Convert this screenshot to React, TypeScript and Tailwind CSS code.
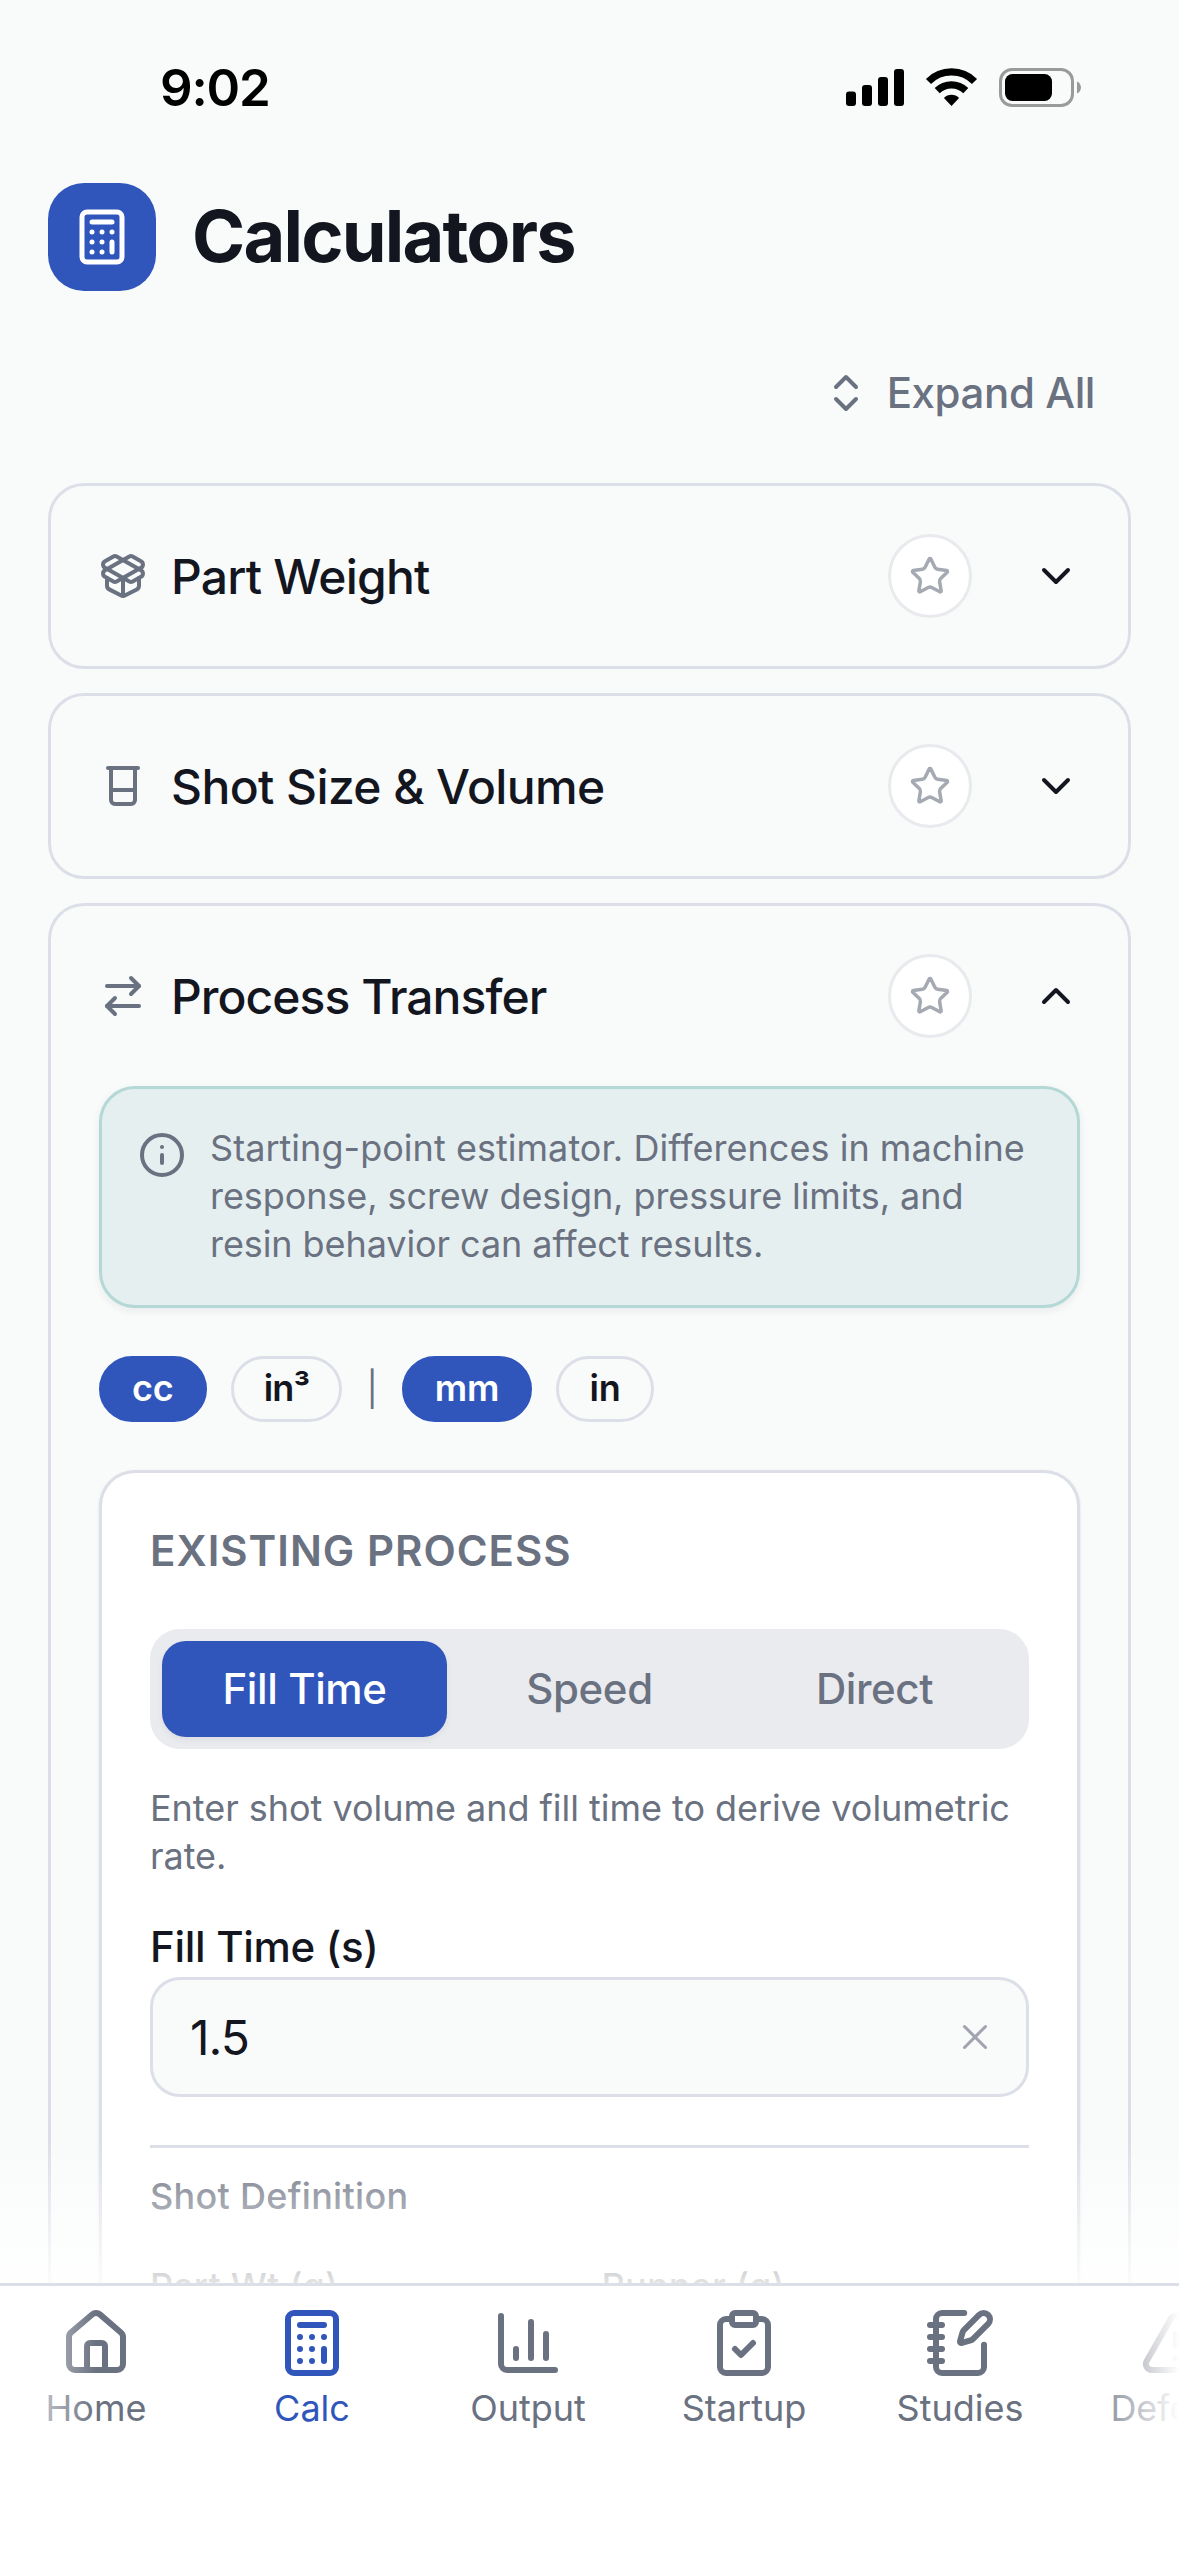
import { useState } from "react";
import type { LucideIcon } from "lucide-react";
import {
  ArrowRightLeft,
  Beaker,
  Calculator,
  ChartColumn,
  ChevronDown,
  ChevronUp,
  ChevronsUpDown,
  ClipboardCheck,
  House,
  Info,
  NotebookPen,
  PackageOpen,
  Star,
  TriangleAlert,
  X,
} from "lucide-react";
import { clsx } from "clsx";

const navItems: { label: string; icon: LucideIcon }[] = [
  { label: "Home", icon: House },
  { label: "Calc", icon: Calculator },
  { label: "Output", icon: ChartColumn },
  { label: "Startup", icon: ClipboardCheck },
  { label: "Studies", icon: NotebookPen },
  { label: "Defects", icon: TriangleAlert },
];

function StatusBar() {
  return (
    <div className="flex h-[174px] shrink-0 items-start justify-between pt-[57px] pr-[98px] pl-[160px]">
      <span className="text-[51px] leading-[62px] font-semibold tracking-[-1.2px] text-black">
        9:02
      </span>
      <svg width="236" height="40" viewBox="0 0 236 40" className="mt-[11px]">
        <rect x="1" y="23.500" width="10" height="14.500" rx="3" />
        <rect x="17" y="17" width="10" height="21" rx="3" />
        <rect x="33" y="9" width="10" height="29" rx="3" />
        <rect x="49" y="1" width="10" height="37" rx="3" />
        <g fill="none" stroke="#000" strokeWidth="7.200">
          <path d="M83.500 13.500a32.500 32.500 0 0 1 46 0" />
          <path d="M92.200 22.700a20.500 20.500 0 0 1 28.600 0" />
        </g>
        <path d="M106.500 38l-7.600-8a10.800 10.800 0 0 1 15.200 0z" />
        <rect
          x="155.500"
          y="1.500"
          width="72"
          height="36"
          rx="11.500"
          fill="none"
          stroke="#999a9a"
          strokeWidth="3"
        />
        <rect x="160" y="6" width="47" height="27" rx="7.500" />
        <path d="M232 13.500c5.300 2.200 5.300 9.800 0 12z" fill="#999a9a" />
      </svg>
    </div>
  );
}

function CardHeader({
  icon: Icon,
  title,
  open,
  titleClass = "tracking-[-0.6px]",
}: {
  icon: LucideIcon;
  title: string;
  open?: boolean;
  titleClass?: string;
}) {
  const Chevron = open ? ChevronUp : ChevronDown;
  return (
    <div className="flex h-[180px] items-center pr-12 pl-12">
      <Icon size={48} className="text-[#6a7180]" />
      <span
        className={clsx(
          "ml-6 flex-1 pt-0.5 text-[48px] leading-[72px] font-medium text-[#14161f]",
          titleClass,
        )}
      >
        {title}
      </span>
      <button className="flex size-[84px] items-center justify-center rounded-full border-3 border-[#e9eaee] bg-white text-[#a5a9b2]">
        <Star size={42} />
      </button>
      <Chevron size={48} className="ml-[60px] text-[#14161f]" />
    </div>
  );
}

function Pill({ label, active }: { label: string; active?: boolean }) {
  return (
    <button
      className={clsx(
        "flex h-[66px] items-center rounded-full border-3 px-[30px] pb-0.5 text-[36px] leading-[48px] font-semibold",
        label === "in³" ? "tracking-[-0.8px]" : "tracking-[-0.1px]",
        active
          ? "border-[#3056bc] bg-[#3056bc] text-white"
          : "border-[#dcdfe7] text-[#14161f]",
      )}
    >
      {label}
    </button>
  );
}

function ProcessForm() {
  const [mode, setMode] = useState("Fill Time");
  return (
    <div className="mt-12 rounded-t-[36px] border-3 border-b-0 border-[#dcdfe7] bg-white px-12 pt-12 pb-12 shadow-sm">
      <h2 className="text-[42px] leading-[60px] font-semibold tracking-[1px] text-[#6a7180]">
        EXISTING PROCESS
      </h2>
      <div className="mt-12 grid h-[120px] grid-cols-3 rounded-[30px] bg-[#eaebef] p-3">
        {["Fill Time", "Speed", "Direct"].map((item) => (
          <button
            key={item}
            onClick={() => setMode(item)}
            className={clsx(
              "rounded-3xl text-[42px] leading-[60px] font-medium tracking-[-0.4px]",
              mode === item
                ? "bg-[#3056bc] text-white shadow-[0_3px_6px_rgba(20,22,31,0.06)]"
                : "text-[#6a7180]",
            )}
          >
            {item}
          </button>
        ))}
      </div>
      <p className="mt-[35px] text-[36px] leading-[48px] tracking-[-0.030px] text-[#6a7180]">
        Enter shot volume and fill time to derive volumetric rate.
      </p>
      <div className="mt-[37px] text-[42px] leading-[60px] font-medium tracking-[-0.3px] text-[#14161f]">
        Fill Time (s)
      </div>
      <div className="flex h-[120px] items-center justify-between rounded-[30px] border-3 border-[#dcdfe7] bg-[#f9fbfb] pr-[30px] pl-[37px]">
        <span className="pt-0.5 text-[48px] leading-[72px] tracking-[-1px] text-[#14161f]">
          1.5
        </span>
        <X size={42} strokeWidth={1.75} className="text-[#a1a3af]" />
      </div>
      <div className="mt-12 border-t-3 border-[#dcdfe7] pt-6">
        <h3 className="text-[36px] leading-[48px] font-medium tracking-[0.3px] text-[#6a7180]">
          Shot Definition
        </h3>
        <div className="mt-9 grid grid-cols-2 gap-6 text-[36px] leading-[60px] font-medium tracking-[0.2px] text-[#14161f]">
          <span>Part Wt (g)</span>
          <span>Runner (g)</span>
        </div>
      </div>
    </div>
  );
}

function BottomNav() {
  return (
    <nav className="relative h-[273px] shrink-0 overflow-hidden border-t-3 border-[#dcdfe7] bg-white">
      <div className="-ml-3 flex w-[1296px] pt-[21px]">
        {navItems.map(({ label, icon: Icon }) => (
          <div
            key={label}
            className={clsx(
              "flex w-[216px] flex-col items-center gap-[5px]",
              label === "Calc" ? "text-[#3056bc]" : "text-[#6a7180]",
            )}
          >
            <Icon size={72} />
            <span className="text-[36px] leading-[48px]">{label}</span>
          </div>
        ))}
      </div>
      <div className="absolute top-0 left-0 h-[168px] w-24 bg-linear-to-r from-white to-white/0" />
      <div className="absolute top-0 right-0 h-[168px] w-24 bg-linear-to-l from-white to-white/0" />
    </nav>
  );
}

export default function App() {
  return (
    <div className="flex h-[2556px] w-[1179px] flex-col overflow-hidden bg-[#f9fbfb] font-[Inter,sans-serif]">
      <StatusBar />
      <main className="relative min-h-0 flex-1 overflow-hidden px-12 pt-[9px]">
        <div className="flex items-center gap-9">
          <div className="flex size-[108px] items-center justify-center rounded-[36px] bg-[#3056bc] text-white">
            <Calculator size={60} />
          </div>
          <h1 className="pb-[3px] text-[72px] leading-[96px] font-bold tracking-[-1.8px] text-[#14161f]">
            Calculators
          </h1>
        </div>

        <div className="mt-[54px] flex h-24 items-center justify-end gap-[17px] pr-9 text-[#6a7180]">
          <ChevronsUpDown size={48} />
          <span className="text-[42px] leading-[60px] font-medium tracking-[-0.4px]">
            Expand All
          </span>
        </div>

        <div className="mt-[42px] flex flex-col gap-6">
          <section className="rounded-[36px] border-3 border-[#dcdfe7]">
            <CardHeader
              icon={PackageOpen}
              title="Part Weight"
              titleClass="tracking-[-0.8px]"
            />
          </section>
          <section className="rounded-[36px] border-3 border-[#dcdfe7]">
            <CardHeader icon={Beaker} title="Shot Size & Volume" />
          </section>
          <section className="rounded-t-[36px] border-3 border-b-0 border-[#dcdfe7]">
            <CardHeader
              icon={ArrowRightLeft}
              title="Process Transfer"
              titleClass="tracking-[-0.950px]"
              open
            />
            <div className="px-12">
              <div className="flex h-[222px] gap-6 rounded-[36px] border-3 border-[#b3d8d6] bg-[#e6eff0] px-9 pt-[35px] shadow-[0_3px_9px_rgba(20,22,31,0.07)]">
                <Info size={48} className="mt-[7px] shrink-0 text-[#6a7180]" />
                <p className="text-[36px] leading-[48px] text-[#6a7180]">
                  <span className="tracking-[0.040px]">
                    Starting-point estimator. Differences in machine
                  </span>
                  <br />
                  <span className="tracking-[-0.080px]">
                    response, screw design, pressure limits, and
                  </span>
                  <br />
                  <span className="tracking-[-0.080px]">
                    resin behavior can affect results.
                  </span>
                </p>
              </div>
              <div className="mt-12 flex items-center gap-6">
                <Pill label="cc" active />
                <Pill label="in³" />
                <span className="text-[34px] leading-[48px] text-[#6a7180]">|</span>
                <Pill label="mm" active />
                <Pill label="in" />
              </div>
              <ProcessForm />
            </div>
          </section>
        </div>
        {/* fade that runs on a little way beneath the tab bar */}
        <div className="pointer-events-none absolute inset-x-0 -bottom-[18px] h-[158px] bg-linear-to-t from-white to-white/0" />
      </main>
      <BottomNav />
    </div>
  );
}
